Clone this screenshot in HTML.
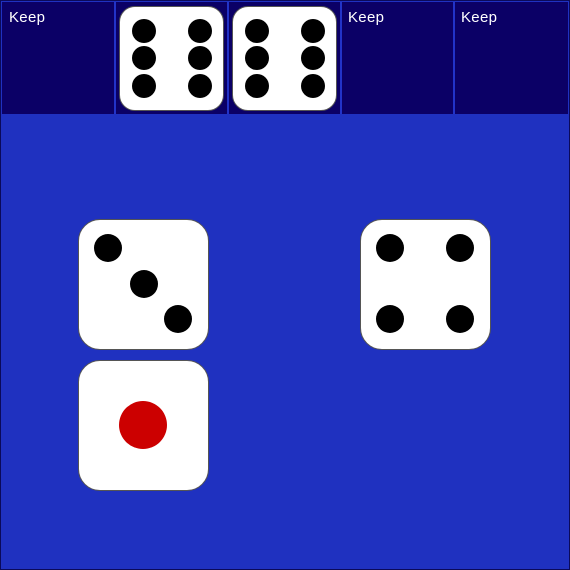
<!DOCTYPE html><html><head><style>
body{margin:0;width:570px;height:570px;background:#1f31c0;position:relative;overflow:hidden;font-family:"Liberation Sans",sans-serif}
.frame{position:absolute;left:0;top:0;width:568px;height:568px;border:1px solid #0b0a5a}
.top{position:absolute;left:2px;top:2px;width:566px;height:112px;background:#0b0066}
.sep{position:absolute;top:2px;width:2px;height:112px;background:#2233c8}
.keep{position:absolute;top:9px;color:#fff;font-size:15px;letter-spacing:0.3px}
.die{position:absolute;background:#fff;border:1px solid #555;box-sizing:border-box}
.p{position:absolute;background:#000;border-radius:50%}
</style></head><body>
<div class="frame"></div>
<div class="top"></div>
<div class="sep" style="left:114px"></div>
<div class="sep" style="left:227px"></div>
<div class="sep" style="left:340px"></div>
<div class="sep" style="left:453px"></div>
<div class="keep" style="left:9px">Keep</div>
<div class="keep" style="left:348px">Keep</div>
<div class="keep" style="left:461px">Keep</div>

<div class="die" style="left:119px;top:6px;width:105px;height:105px;border-radius:16px"></div>
<div class="die" style="left:232px;top:6px;width:105px;height:105px;border-radius:16px"></div>

<div class="die" style="left:78px;top:219px;width:131px;height:131px;border-radius:22px"></div>
<div class="die" style="left:78px;top:360px;width:131px;height:131px;border-radius:22px"></div>
<div class="die" style="left:360px;top:219px;width:131px;height:131px;border-radius:22px"></div>

<div id="pips"></div>
<script>
var P=[];
[144,200].forEach(x=>[31,58,86].forEach(y=>P.push([x,y,12])));
[257,313].forEach(x=>[31,58,86].forEach(y=>P.push([x,y,12])));
[[108,248],[144,284],[178,319],[390,248],[460,248],[390,319],[460,319]].forEach(a=>P.push([a[0],a[1],14]));
var h='';P.forEach(a=>{h+='<div class="p" style="left:'+(a[0]-a[2])+'px;top:'+(a[1]-a[2])+'px;width:'+2*a[2]+'px;height:'+2*a[2]+'px"></div>'});
h+='<div class="p" style="left:119px;top:401px;width:48px;height:48px;background:#cc0000"></div>';
document.getElementById('pips').innerHTML=h;
</script>
</body></html>
